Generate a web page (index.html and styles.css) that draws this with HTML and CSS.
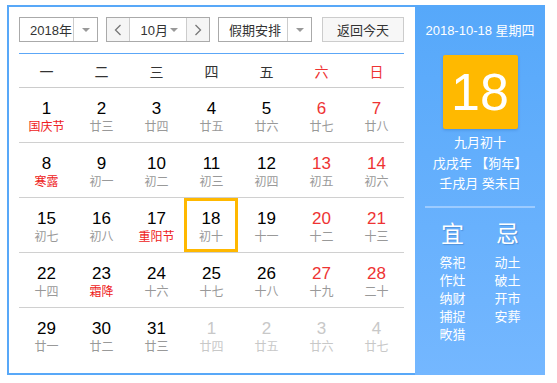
FILE: index.html
```html
<!DOCTYPE html>
<html lang="zh-CN">
<head>
<meta charset="utf-8">
<title>万年历</title>
<link rel="stylesheet" href="styles.css">
</head>
<body>
<div class="cal">
  <div class="main">
    <div class="toolbar">
      <div class="sel sel-year"><span class="sel-text">2018年</span><span class="sel-arrow"><i class="tri"></i></span></div>
      <div class="month-group">
        <span class="nav"><svg width="8" height="12" viewBox="0 0 8 12"><polyline points="6.5,1 1.5,6 6.5,11" fill="none" stroke="#777" stroke-width="1.3"/></svg></span>
        <div class="sel-month"><span class="sel-text">10月</span><i class="tri"></i></div>
        <span class="nav"><svg width="8" height="12" viewBox="0 0 8 12"><polyline points="1.5,1 6.5,6 1.5,11" fill="none" stroke="#777" stroke-width="1.3"/></svg></span>
      </div>
      <div class="sel sel-holiday"><span class="sel-text">假期安排</span><span class="sel-arrow"><i class="tri"></i></span></div>
      <button class="today">返回今天</button>
    </div>
    <div class="week-head">
      <span>一</span><span>二</span><span>三</span><span>四</span><span>五</span><span class="red">六</span><span class="red">日</span>
    </div>
    <div class="grid">
      <div class="row">
        <div class="cell"><b>1</b><small class="fest">国庆节</small></div>
        <div class="cell"><b>2</b><small>廿三</small></div>
        <div class="cell"><b>3</b><small>廿四</small></div>
        <div class="cell"><b>4</b><small>廿五</small></div>
        <div class="cell"><b>5</b><small>廿六</small></div>
        <div class="cell wk"><b>6</b><small>廿七</small></div>
        <div class="cell wk"><b>7</b><small>廿八</small></div>
      </div>
      <div class="row">
        <div class="cell"><b>8</b><small class="fest">寒露</small></div>
        <div class="cell"><b>9</b><small>初一</small></div>
        <div class="cell"><b>10</b><small>初二</small></div>
        <div class="cell"><b>11</b><small>初三</small></div>
        <div class="cell"><b>12</b><small>初四</small></div>
        <div class="cell wk"><b>13</b><small>初五</small></div>
        <div class="cell wk"><b>14</b><small>初六</small></div>
      </div>
      <div class="row">
        <div class="cell"><b>15</b><small>初七</small></div>
        <div class="cell"><b>16</b><small>初八</small></div>
        <div class="cell"><b>17</b><small class="fest">重阳节</small></div>
        <div class="cell cur"><b>18</b><small>初十</small></div>
        <div class="cell"><b>19</b><small>十一</small></div>
        <div class="cell wk"><b>20</b><small>十二</small></div>
        <div class="cell wk"><b>21</b><small>十三</small></div>
      </div>
      <div class="row">
        <div class="cell"><b>22</b><small>十四</small></div>
        <div class="cell"><b>23</b><small class="fest">霜降</small></div>
        <div class="cell"><b>24</b><small>十六</small></div>
        <div class="cell"><b>25</b><small>十七</small></div>
        <div class="cell"><b>26</b><small>十八</small></div>
        <div class="cell wk"><b>27</b><small>十九</small></div>
        <div class="cell wk"><b>28</b><small>二十</small></div>
      </div>
      <div class="row">
        <div class="cell"><b>29</b><small>廿一</small></div>
        <div class="cell"><b>30</b><small>廿二</small></div>
        <div class="cell"><b>31</b><small>廿三</small></div>
        <div class="cell other"><b>1</b><small>廿四</small></div>
        <div class="cell other"><b>2</b><small>廿五</small></div>
        <div class="cell other"><b>3</b><small>廿六</small></div>
        <div class="cell other"><b>4</b><small>廿七</small></div>
      </div>
    </div>
  </div>
  <div class="side">
    <div class="side-date">2018-10-18 星期四</div>
    <div class="big-day">18</div>
    <div class="lunar">
      <p>九月初十</p>
      <p>戊戌年 【狗年】</p>
      <p>壬戌月 癸未日</p>
    </div>
    <div class="sep"></div>
    <div class="yiji">
      <div class="col">
        <div class="yj-title">宜</div>
        <p>祭祀</p><p>作灶</p><p>纳财</p><p>捕捉</p><p>畋猎</p>
      </div>
      <div class="col">
        <div class="yj-title">忌</div>
        <p>动土</p><p>破土</p><p>开市</p><p>安葬</p>
      </div>
    </div>
  </div>
</div>
</body>
</html>
```
FILE: styles.css
```css
* { box-sizing: border-box; }
body {
  margin: 0;
  background: #fff;
  font-family: "Liberation Sans", "Noto Sans CJK SC", sans-serif;
  color: #333;
}
.cal {
  display: flex;
  margin: 5px 0 0 7px;
  width: 538px;
  height: 370px;
}
.main {
  width: 408px;
  border: 2px solid #58a8f8;
  border-right: 0;
  padding: 10px 11px 0 10px;
}
.toolbar {
  display: flex;
  height: 25px;
  font-size: 13px;
}
.sel {
  display: flex;
  height: 25px;
  border: 1px solid #aaa;
  background: #fff;
}
.sel-text {
  display: flex;
  align-items: center;
  padding-left: 10px;
  flex: 1;
  color: #333;
}
.sel-arrow {
  width: 24px;
  border-left: 1px solid #ccc;
  display: flex;
  align-items: center;
  justify-content: center;
}
.tri {
  display: block;
  width: 0;
  height: 0;
  border-left: 4px solid transparent;
  border-right: 4px solid transparent;
  border-top: 4px solid #999;
}
.sel-year { width: 79px; }
.month-group {
  display: flex;
  margin-left: 8px;
  width: 104px;
  height: 25px;
  border: 1px solid #aaa;
}
.nav {
  width: 22px;
  background: #f5f5f5;
  display: flex;
  align-items: center;
  justify-content: center;
}
.sel-month {
  width: 60px;
  border-left: 1px solid #ccc;
  border-right: 1px solid #ccc;
  display: flex;
  align-items: center;
  padding-right: 8px;
}
.sel-month .sel-text { padding-left: 11px; }
.sel-holiday { width: 94px; margin-left: 8px; }
.today {
  margin-left: 10px;
  width: 82px;
  height: 25px;
  border: 1px solid #ccc;
  background: #f7f7f7;
  font: inherit;
  font-size: 13px;
  color: #333;
  padding: 0;
}
.week-head {
  margin-top: 11px;
  border-top: 1px solid #5ca7f7;
  border-bottom: 1px solid #ccc;
  height: 35px;
  display: grid;
  grid-template-columns: repeat(7, 55px);
  align-items: center;
  font-size: 14px;
  color: #333;
}
.week-head span { text-align: center; }
.week-head .red { color: #e33; }
.row {
  display: grid;
  grid-template-columns: repeat(7, 55px);
  height: 55px;
  border-bottom: 1px solid #d0d0d0;
}
.row:last-child { border-bottom: 0; height: 54px; }
.cell {
  display: flex;
  flex-direction: column;
  align-items: center;
  padding-top: 11px;
  height: 54px;
}
.cell b {
  font-weight: normal;
  font-size: 17px;
  line-height: 20px;
  color: #000;
}
.cell small {
  font-size: 12px;
  line-height: 17px;
  color: #999;
}
.cell small.fest { color: #e22; }
.cell.wk b { color: #e33; }
.cell.other b, .cell.other small { color: #c8c8c8; }
.cell.cur {
  border: 3px solid #ffb800;
  padding-top: 8px;
  width: 54px;
}
.side {
  width: 130px;
  background: linear-gradient(#56a8fa, #74b7ff);
  color: #fff;
  display: flex;
  flex-direction: column;
  align-items: center;
  padding-top: 18px;
}
.side-date {
  font-size: 13px;
  line-height: 16px;
}
.big-day {
  margin-top: 16px;
  width: 75px;
  height: 74px;
  background: #ffb900;
  border-radius: 2px;
  box-shadow: 0 1px 3px rgba(0, 60, 140, 0.25);
  display: flex;
  align-items: center;
  justify-content: center;
  font-size: 52px;
  line-height: 1;
  color: #fff;
}
.lunar {
  margin-top: 4px;
  text-align: center;
  font-size: 13px;
  line-height: 20.5px;
}
.lunar p { margin: 0; }
.sep {
  margin-top: 11px;
  width: 110px;
  height: 2px;
  background: #9ccbff;
}
.yiji {
  display: flex;
  width: 110px;
  margin-top: 12px;
}
.col {
  flex: 1;
  text-align: center;
  font-size: 13px;
  line-height: 18px;
}
.col p { margin: 0; }
.yj-title {
  font-size: 23px;
  line-height: 28px;
  margin-bottom: 6px;
  text-shadow: 1px 1px 1px rgba(0, 50, 120, 0.25);
}
```
